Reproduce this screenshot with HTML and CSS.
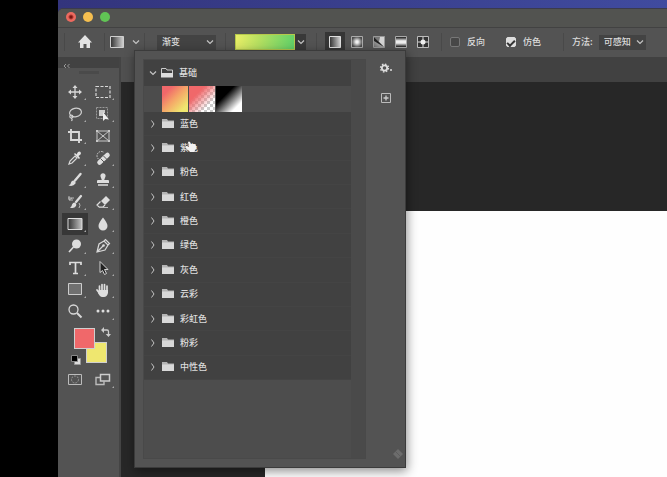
FILE: index.html
```html
<!DOCTYPE html>
<html lang="zh-CN">
<head>
<meta charset="utf-8">
<title>渐变</title>
<link rel="stylesheet" href="styles.css">
</head>
<body>
<svg class="defs" aria-hidden="true">
  <defs>
    <linearGradient id="g-lin"><stop offset="0" stop-color="#303030"/><stop offset="1" stop-color="#d4d4d4"/></linearGradient>
    <linearGradient id="g-lin2"><stop offset="0" stop-color="#303030"/><stop offset="1" stop-color="#c4c4c4"/></linearGradient>
    <radialGradient id="g-rad"><stop offset="0.2" stop-color="#f2f2f2"/><stop offset="1" stop-color="#4c4c4c"/></radialGradient>
    <linearGradient id="g-ang" x1="0" y1="1" x2="1" y2="0"><stop offset="0" stop-color="#666"/><stop offset="1" stop-color="#eee"/></linearGradient>
    <linearGradient id="g-ref" x1="0" y1="0" x2="0" y2="1"><stop offset="0.1" stop-color="#333"/><stop offset="0.4" stop-color="#eee"/><stop offset="0.6" stop-color="#eee"/><stop offset="0.9" stop-color="#333"/></linearGradient>
    <symbol id="folder" viewBox="0 0 12 10"><path d="M0 0h5l1 1.500h6V9H0z" fill="#b4b4b4"/><path d="M0 2.500h12V9H0z" fill="#d8d8d8"/></symbol>
    <symbol id="right" viewBox="0 0 6 8"><path d="M1.500 .5L4 4 1.500 7.500" fill="none" stroke="#c4c4c4"/></symbol>
    <symbol id="down" viewBox="0 0 8 6"><path d="M1 1.500L4 4.500 7 1.500" fill="none" stroke="#c4c4c4" stroke-width="1.200"/></symbol>
  </defs>
</svg>
<div class="desktop">
  <main class="window">
    <header class="titlebar">
      <button class="light close" aria-label="关闭"></button>
      <button class="light minimize" aria-label="最小化"></button>
      <button class="light zoom" aria-label="缩放"></button>
    </header>

    <section class="options">
      <div class="group home"><button aria-label="主页"><svg width="14" height="14" viewBox="0 0 14 14"><path d="M7 0l7 7.500h-2V13H8.500V9h-3v4H2V7.500H0z" fill="#e2e2e2"/></svg></button></div>
      <div class="group preset"><button aria-label="工具预设"><svg width="14" height="12" viewBox="0 0 14 12"><path d="M.5.5h13v11H.5z" fill="url(#g-lin)" stroke="#cfcfcf"/></svg><svg width="8" height="6"><use href="#down"/></svg></button></div>
      <div class="group mode">
        <div class="picker wide"><select aria-label="模式"><option>渐变</option></select><svg width="8" height="6"><use href="#down"/></svg></div>
      </div>
      <div class="group ramp"><button class="ramp-bar" aria-label="渐变编辑器"></button><button class="ramp-drop" aria-label="打开渐变拾色器"><svg width="8" height="6"><use href="#down"/></svg></button></div>
      <div class="group types">
        <button class="active" aria-label="线性渐变"><svg width="12" height="12" viewBox="0 0 12 12"><path d="M.5.5h11v11H.5z" fill="url(#g-lin)" stroke="#dedede"/></svg></button>
        <button aria-label="径向渐变"><svg width="12" height="12" viewBox="0 0 12 12"><path d="M.5.5h11v11H.5z" fill="url(#g-rad)" stroke="#aaa"/></svg></button>
        <button aria-label="角度渐变"><svg width="12" height="12" viewBox="0 0 12 12"><path d="M.5.5h11v11H.5z" fill="url(#g-ang)" stroke="#999"/><path d="M1 1l10 10V1z" fill="#d4d4d4"/><path d="M1 1h6L6 6z" fill="#777"/><path d="M1 1l5 5 5 5L1 5z" fill="#222"/></svg></button>
        <button aria-label="对称渐变"><svg width="12" height="12" viewBox="0 0 12 12"><path d="M.5.5h11v11H.5z" fill="url(#g-ref)" stroke="#aaa"/></svg></button>
        <button aria-label="菱形渐变"><svg width="12" height="12" viewBox="0 0 12 12"><path d="M.5.5h11v11H.5z" fill="#333" stroke="#bbb"/><path d="M6 1v10M1 6h10" stroke="#a4a4a4" stroke-width="1.500"/><circle cx="6" cy="6" r="2.500" fill="#eee"/></svg></button>
      </div>
      <div class="group checks">
        <label><input type="checkbox">反向</label>
        <label><input type="checkbox" checked>仿色</label>
      </div>
      <div class="group method"><label for="method">方法:</label>
        <div class="picker"><select id="method"><option>可感知</option></select><svg width="8" height="6"><use href="#down"/></svg></div>
      </div>
    </section>

    <div class="workspace">
      <aside class="tools">
        <div class="collapse"><button aria-label="折叠"><svg width="8" height="6" viewBox="0 0 8 6"><path d="M3 1L1 3l2 2M6.500 1l-2 2 2 2" fill="none" stroke="#999"/></svg></button></div>
        <div class="grip"></div>
        <div class="tool-grid">
          <button class="more" aria-label="移动"><svg viewBox="0 0 16 16"><path d="M8 3v10M3 8h10" stroke="#d8d8d8" stroke-width="1.300"/><path d="M8 1l2.500 3h-5zM8 15l2.500-3h-5zM1 8l3-2.500v5zM15 8l-3-2.500v5z" fill="#d8d8d8"/></svg></button>
          <button class="more" aria-label="矩形选框"><svg viewBox="0 0 16 16"><path d="M1 2.500h14v11H1z" fill="none" stroke="#d8d8d8" stroke-width="1.200" stroke-dasharray="3 1.500"/></svg></button>
          <button class="more" aria-label="套索"><svg viewBox="0 0 16 16"><g fill="none" stroke="#d0d0d0" stroke-width="1.200"><ellipse cx="8.500" cy="6.500" rx="6" ry="4.300" transform="rotate(-12 8.500 6.500)"/><circle cx="4.300" cy="10.500" r="1.500"/><path d="M4 12q2 1 .5 3"/></g></svg></button>
          <button class="more" aria-label="对象选择"><svg viewBox="0 0 16 16"><path d="M1.500 1.500h11v11h-11z" fill="none" stroke="#999" stroke-dasharray="2 1"/><path d="M4 4h6v3H8v3H4z" fill="#ccc"/><path d="M8 6v9l2.200-2 3.800.500z" fill="#f0f0f0"/></svg></button>
          <button class="more" aria-label="裁剪"><svg viewBox="0 0 16 16"><path d="M4 1v11h11M1 4h11v11" fill="none" stroke="#d8d8d8" stroke-width="1.900"/></svg></button>
          <button aria-label="图框"><svg viewBox="0 0 16 16"><path d="M2 3h12v10H2zM2 3l12 10M14 3L2 13" fill="none" stroke="#c8c8c8"/><path d="M1 2h2v2H1zM13 2h2v2h-2zM1 12h2v2H1zM13 12h2v2h-2z" fill="#c8c8c8"/></svg></button>
          <button class="more" aria-label="吸管"><svg viewBox="0 0 16 16"><path d="M2 14l1-3 5-5 2 2-5 5z" fill="none" stroke="#d8d8d8" stroke-width="1.200"/><path d="M7 4l1-1 1.500 1.500L11 2q1.500-1 2.500 0t0 2.500L11.500 6 13 8l-1 1z" fill="#e0e0e0"/></svg></button>
          <button class="more" aria-label="修复画笔"><svg viewBox="0 0 16 16"><path d="M3.500 9A4 4 0 1 1 9 2.500" fill="none" stroke="#ccc" stroke-dasharray="1.500 1"/><path d="M4.500 12.500L12.500 5" stroke="#ddd" stroke-width="4.600" stroke-linecap="round"/><path d="M5.500 8.500l4 4M8.500 6l4 4" stroke="#555"/></svg></button>
          <button class="more" aria-label="画笔"><svg viewBox="0 0 16 16"><path d="M13.500 2L8 8.500" stroke="#ddd" stroke-width="2.400" stroke-linecap="round"/><path d="M6.500 8.500Q9 9 8.500 11.500 6 15 1.500 13.500 4 12.500 4 10.500 4.500 8.500 6.500 8.500z" fill="#ddd"/></svg></button>
          <button class="more" aria-label="仿制图章"><svg viewBox="0 0 16 16"><path d="M6.800 8L5.500 4.500a2.600 2.600 0 1 1 5 0L9.200 8H13q1 0 1 1v2H2V9q0-1 1-1z" fill="#ddd"/><path d="M3 13h10" stroke="#ddd" stroke-width="1.500"/></svg></button>
          <button class="more" aria-label="历史记录画笔"><svg viewBox="0 0 16 16"><path d="M14 2L9 8" stroke="#ddd" stroke-width="2.200" stroke-linecap="round"/><path d="M7.500 8.500Q10 9 9 12 7 15 3 13.500 5 12.500 5 10.500 6 8.500 7.500 8.500z" fill="#ddd"/><path d="M1 4h6M2 6h4M2 2v4l3-2M12 9q2 2 0 5" fill="none" stroke="#bbb"/></svg></button>
          <button class="more" aria-label="橡皮擦"><svg viewBox="0 0 16 16"><path d="M6 7l5-5 4 4-5 5z" fill="#ddd"/><path d="M5.500 7.500L2 11l2 2h4l2-2" fill="none" stroke="#ddd" stroke-width="1.200"/><path d="M4 13.500h9" stroke="#bbb"/></svg></button>
          <button class="more active" aria-label="渐变"><svg viewBox="0 0 16 16"><path d="M1 2.500h14v11H1z" fill="url(#g-lin2)" stroke="#ddd"/></svg></button>
          <button class="more" aria-label="模糊"><svg viewBox="0 0 16 16"><path d="M8 1.500Q12.500 7 12.500 10a4.500 4.500 0 0 1-9 0Q3.500 7 8 1.500z" fill="#ddd"/></svg></button>
          <button class="more" aria-label="减淡"><svg viewBox="0 0 16 16"><circle cx="9.500" cy="6" r="4.500" fill="#ddd"/><path d="M6.500 9L2 14" stroke="#ddd" stroke-width="1.600"/></svg></button>
          <button class="more" aria-label="钢笔"><svg viewBox="0 0 16 16"><path d="M2 14l2-8 5-3 4 4-3 5zM2 14l6-6M9 3l1.500-1.500 4 4L13 7" fill="none" stroke="#d8d8d8" stroke-width="1.200"/><circle cx="8.500" cy="7.500" r="1.300" fill="#ddd"/></svg></button>
          <button class="more" aria-label="文字"><svg viewBox="0 0 16 16"><path d="M3 5V2.500h11V5M8.500 2.500v11M6 13.500h5" fill="none" stroke="#ddd" stroke-width="1.700"/></svg></button>
          <button class="more" aria-label="路径选择"><svg viewBox="0 0 16 16"><path d="M5 1.500v11l2.500-2 2 4 2-1-2-4h3.500z" fill="#222" stroke="#d0d0d0"/></svg></button>
          <button class="more" aria-label="矩形"><svg viewBox="0 0 16 16"><path d="M1.500 1.500h13v11h-13z" fill="#707070" stroke="#ccc"/></svg></button>
          <button class="more" aria-label="抓手"><svg viewBox="0 0 16 16"><path d="M4.500 4v6M7 2.500V9M9.500 2.500V9M12 4v6M2 8l3 4" stroke="#ddd" stroke-width="1.700" stroke-linecap="round"/><path d="M4 8h9v3q-1 4-4 4H7q-2 0-4-4z" fill="#ddd"/></svg></button>
          <button aria-label="缩放"><svg viewBox="0 0 16 16"><circle cx="6.500" cy="5.500" r="4.500" fill="none" stroke="#d8d8d8" stroke-width="1.300"/><path d="M10 9l4.500 4.500" stroke="#d8d8d8" stroke-width="2"/></svg></button>
          <button class="more" aria-label="编辑工具栏"><svg viewBox="0 0 16 16"><g fill="#ddd"><circle cx="3" cy="7" r="1.500"/><circle cx="8" cy="7" r="1.500"/><circle cx="13" cy="7" r="1.500"/></g></svg></button>
        </div>
        <div class="colors">
          <button class="chip back" aria-label="背景色"></button>
          <button class="chip front" aria-label="前景色"></button>
          <button class="swap" aria-label="切换颜色"><svg width="10" height="10" viewBox="0 0 10 10"><path d="M2.500 3H6q1.500 0 1.500 1.500V8" fill="none" stroke="#ccc" stroke-width="1.300"/><path d="M0 3l3-3v6zM4.700 7h5.300L7.500 10z" fill="#ccc"/></svg></button>
          <button class="reset" aria-label="默认颜色"><svg width="10" height="10" viewBox="0 0 10 10"><path d="M3.500 3.500h6v6h-6z" fill="#ddd" stroke="#999"/><path d="M.5.5h6v6h-6z" fill="#000" stroke="#888"/></svg></button>
        </div>
        <div class="tool-grid">
          <button aria-label="快速蒙版"><svg viewBox="0 0 16 16"><path d="M1.500 2.500h13v10h-13z" fill="none" stroke="#bbb"/><circle cx="8" cy="7.500" r="3.500" fill="none" stroke="#999" stroke-dasharray="2 1"/></svg></button>
          <button class="more" aria-label="屏幕模式"><svg viewBox="0 0 16 16"><path d="M5 5.500H1v7h8v-3" fill="none" stroke="#bbb" stroke-width="1.400"/><path d="M5.500 2.500h9V9h-9z" fill="#555" stroke="#ccc" stroke-width="1.500"/></svg></button>
        </div>
      </aside>
      <section class="document">
        <div class="tabs"><div class="tab"></div></div>
        <div class="canvas"><div class="paper"></div></div>
      </section>
    </div>

    <section class="popup" aria-label="渐变拾色器">
      <div class="list">
        <div class="rows">
          <button class="folder open"><svg width="8" height="6"><use href="#down"/></svg><svg width="12" height="10" viewBox="0 0 12 10"><path d="M.5 9V.5H5L6 2h5.500v3" fill="none" stroke="#ccc"/><path d="M0 5h12v4.500H0z" fill="#ddd"/></svg>基础</button>
          <div class="swatches"><button class="swatch duo" aria-label="前景色到背景色"></button><button class="swatch fade" aria-label="前景色到透明"></button><button class="swatch mono" aria-label="黑白"></button></div>
          <div class="folders">
            <button class="folder"><svg class="arrow"><use href="#right"/></svg><svg class="dir"><use href="#folder"/></svg>蓝色</button>
            <button class="folder hovered"><svg class="arrow"><use href="#right"/></svg><svg class="dir"><use href="#folder"/></svg>紫色<svg class="hand" viewBox="0 0 10 12"><path d="M2 1q1-1 2 0l1 2 3 0q2 0 2 2v3l-2 3H4L0 7V5l3 1z" fill="#f2f2f2"/></svg></button>
            <button class="folder"><svg class="arrow"><use href="#right"/></svg><svg class="dir"><use href="#folder"/></svg>粉色</button>
            <button class="folder"><svg class="arrow"><use href="#right"/></svg><svg class="dir"><use href="#folder"/></svg>红色</button>
            <button class="folder"><svg class="arrow"><use href="#right"/></svg><svg class="dir"><use href="#folder"/></svg>橙色</button>
            <button class="folder"><svg class="arrow"><use href="#right"/></svg><svg class="dir"><use href="#folder"/></svg>绿色</button>
            <button class="folder"><svg class="arrow"><use href="#right"/></svg><svg class="dir"><use href="#folder"/></svg>灰色</button>
            <button class="folder"><svg class="arrow"><use href="#right"/></svg><svg class="dir"><use href="#folder"/></svg>云彩</button>
            <button class="folder"><svg class="arrow"><use href="#right"/></svg><svg class="dir"><use href="#folder"/></svg>彩虹色</button>
            <button class="folder"><svg class="arrow"><use href="#right"/></svg><svg class="dir"><use href="#folder"/></svg>粉彩</button>
            <button class="folder"><svg class="arrow"><use href="#right"/></svg><svg class="dir"><use href="#folder"/></svg>中性色</button>
          </div>
        </div>
        <div class="track"></div>
      </div>
      <div class="side">
        <button aria-label="设置"><svg width="14" height="12" viewBox="0 0 14 12"><circle cx="5.500" cy="5" r="2.700" fill="none" stroke="#ddd" stroke-width="1.800"/><circle cx="5.500" cy="5" r="4" fill="none" stroke="#ddd" stroke-width="1.300" stroke-dasharray="1.570 1.570"/><path d="M11 6h2v2h-2z" fill="#bbb"/></svg></button>
        <button aria-label="新建预设"><svg width="12" height="12" viewBox="0 0 12 12"><path d="M1.500 1.500h9v9h-9z" fill="none" stroke="#bbb"/><path d="M6 3.500v5M3.500 6h5" stroke="#ccc" stroke-width="1.300"/></svg></button>
        <svg class="resize" width="10" height="10" viewBox="0 0 10 10"><path d="M5 0l5 5-5 5-5-5z" fill="#6c6c6c"/><path d="M2 2l6 6" stroke="#5c5c5c"/></svg>
      </div>
    </section>
  </main>
</div>
</body>
</html>
```

FILE: styles.css
```css
* { box-sizing: border-box; }

body {
  margin: 0;
  background: #000;
  color: #dcdcdc;
  font: 500 9px/14px "Noto Sans CJK SC", sans-serif;
}

button, select, input { font: inherit; color: inherit; margin: 0; }
button { padding: 0; border: 0; background: none; }
svg { display: block; flex: none; }
.defs { position: absolute; width: 0; height: 0; }

.desktop {
  height: 100vh;
  margin-left: 58px;
  padding-top: 8px;
  overflow: hidden;
  background: linear-gradient(90deg, #33347c, #404b9f);
}

.window {
  position: relative;
  display: flex;
  flex-direction: column;
  height: 100%;
  background: #535353;
  border-top: 1px solid #3b3b4c;
  border-radius: 5px 0 0 0;
}

.titlebar {
  display: flex;
  align-items: center;
  gap: 7px;
  height: 19px;
  padding: 0 8px 2px;
  background: #525350;
  border-bottom: 1px solid #424242;
  border-radius: 5px 0 0 0;
}
.light { width: 10px; height: 10px; border-radius: 50%; }
.close { background: radial-gradient(circle, #7c1410 1px, #ed6a5f 3px); }
.minimize { background: #f5bf4f; }
.zoom { background: #61c455; }

.options {
  display: flex;
  align-items: center;
  height: 29px;
  padding: 0 0 1px 6px;
}
.group {
  display: flex;
  align-items: center;
  height: 18px;
  border-left: 1px solid #494949;
}
.home, .preset { width: 40px; justify-content: center; }
.preset button { display: flex; align-items: center; gap: 8px; }
.mode { padding: 0 9px 0 12px; }
.ramp { padding: 0 10px 0 9px; }
.types { padding: 0 8px; gap: 2px; }
.checks { width: 122px; padding-left: 8px; gap: 21px; }
.checks label { display: flex; align-items: center; gap: 7px; }
.method { padding-left: 8px; gap: 6px; }

.picker {
  display: flex;
  align-items: center;
  height: 15px;
  padding-right: 2px;
  background: #434343;
}
.picker select {
  appearance: none;
  padding: 0 4px 0 5px;
  border: 0;
  background: none;
}
.picker.wide { width: 59px; }
.wide select { flex: 1; }

.ramp-bar {
  width: 60px;
  height: 16px;
  border: 1px solid #b5c94b;
  background: linear-gradient(100deg, #e9ee67, #b5df60 40%, #5fd068);
}
.ramp-drop { display: grid; place-items: center; width: 11px; height: 16px; background: #393939; }
.types button { display: grid; place-items: center; width: 20px; height: 20px; }
.types .active { background: #363636; }

input[type="checkbox"] {
  appearance: none;
  display: grid;
  place-items: center;
  width: 10px;
  height: 10px;
  border: 1px solid #777;
  border-radius: 2px;
  background: #474747;
}
input[type="checkbox"]:checked { border-color: #ddd; background: #ddd; }
input[type="checkbox"]:checked::before {
  content: "";
  width: 6px;
  height: 3px;
  border: solid #333;
  border-width: 0 0 2px 2px;
  transform: rotate(-45deg);
}

.workspace { display: flex; flex: 1; min-height: 0; }

.tools {
  width: 63px;
  background: #535353;
  border-right: 2px solid #444;
}
.collapse { height: 11px; padding: 2px 5px; background: #424242; }
.grip { width: 20px; height: 3px; margin: 3px auto 7px; background: #4a4a4a; }
.tool-grid {
  display: grid;
  grid-template-columns: 26px 26px;
  grid-auto-rows: 22px;
  column-gap: 2px;
  padding-left: 4px;
}
.tool-grid button { position: relative; display: grid; place-items: center; }
.tool-grid svg { width: 16px; height: 16px; }
.tool-grid .active { background: #373737; }
.more::after {
  content: "";
  position: absolute;
  right: 2px;
  bottom: 3px;
  border: 1px solid #aaa;
  border-top-color: transparent;
  border-left-color: transparent;
}

.colors { position: relative; height: 46px; }
.colors button { position: absolute; }
.chip { width: 21px; height: 21px; border: 1px solid #cfcfcf; }
.front { left: 16px; top: 5px; background: #f0686a; }
.back { left: 28px; top: 19px; background: #efe76f; }
.swap { left: 43px; top: 4px; }
.reset { left: 13px; top: 32px; }

.document { display: flex; flex: 1; flex-direction: column; min-width: 0; }
.tabs { height: 25px; background: #414141; }
.tab { width: 50%; height: 100%; background: #505050; }
.canvas { display: flex; flex: 1; padding: 129px 0 0 144px; background: #272727; }
.paper { flex: 1; background: #fefefe; }

.popup {
  position: absolute;
  left: 76px;
  top: 41px;
  display: flex;
  width: 272px;
  height: 418px;
  padding: 8px 0 8px 8px;
  background: #535353;
  border: 1px solid #3b3b3b;
  box-shadow: 1px 3px 10px rgb(0 0 0 / 45%);
}
.list { display: flex; flex: 1; background: #4d4d4d; border: 1px solid #494949; }
.rows { flex: 1; }
.track { width: 14px; background: #4a4a4a; }
.folder {
  display: flex;
  align-items: center;
  gap: 6px;
  width: 100%;
  padding-left: 6px;
  background: #414141;
  text-align: left;
}
.open { height: 26px; gap: 4px; padding-left: 5px; }
.open svg + svg { margin-right: 2px; }
.arrow { width: 6px; height: 8px; }
.dir { width: 12px; height: 10px; }
.swatches { display: flex; gap: 1px; padding-left: 18px; height: 26px; background: #4c4c4c; }
.swatch { width: 26px; height: 26px; }
.duo { background: linear-gradient(135deg, #f0686a 20%, #f5a768 50%, #efe76f 85%); }
.fade {
  background:
    linear-gradient(135deg, #f0686a 30%, transparent 75%),
    repeating-conic-gradient(#ccc 0 25%, #fff 0 50%) 0 0 / 6px 6px;
}
.mono { background: linear-gradient(135deg, #000 35%, #fff 80%); }
.folders { display: grid; grid-auto-rows: 1fr; height: 268px; }
.folders .folder { border-bottom: 1px solid #444; }
.hovered { position: relative; }
.hand { position: absolute; left: 42px; top: 5px; width: 10px; height: 12px; }

.side {
  display: flex;
  flex-direction: column;
  align-items: center;
  gap: 17px;
  width: 39px;
  padding-top: 4px;
}
.resize { margin: auto 2px 0 auto; }
```
